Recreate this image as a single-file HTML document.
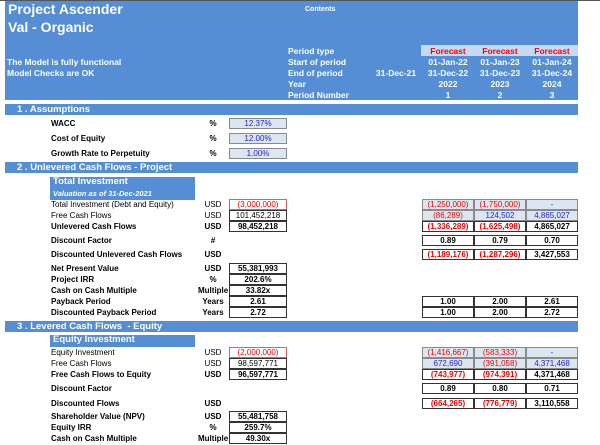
<!DOCTYPE html>
<html><head><meta charset="utf-8"><style>
body{margin:0;width:600px;height:445px;background:#fff;position:relative;overflow:hidden;font-family:"Liberation Sans",sans-serif;font-size:8px;color:#000}
div{position:absolute;white-space:nowrap}
.hd{background:#558ed5}
.w{color:#fff;font-weight:bold}
.bar{left:5px;width:573px;height:11px;background:#558ed5;color:#fff;font-weight:bold;font-size:9.5px;line-height:11px;padding-left:12px;box-sizing:border-box}
.l{left:51px;font-size:8px;line-height:10px}
.b{font-weight:bold}
.u{left:198px;width:30px;text-align:center;line-height:10px}
.c{height:9px;line-height:9px;border:1px solid #333;text-align:center;box-sizing:content-box}
.v{left:229px;width:56px}
.c1{left:422px;width:50px}.c2{left:474px;width:50px}.c3{left:526px;width:50px}
.in{background:#dce6f1;border-color:#8a8a8a}
.r{color:#e00}.bl{color:#2020e0}
.hc{width:52px;text-align:center;color:#fff;font-weight:bold;font-size:8.5px}
</style></head><body>
<div style="left:0;top:0;width:600px;height:1px;background:#555"></div>
<div class="hd" style="left:5px;top:1px;width:573px;height:99px"></div>
<div class="w" style="left:8px;top:1px;font-size:14px">Project Ascender</div>
<div class="w" style="left:8px;top:19px;font-size:14px">Val - Organic</div>
<div class="w" style="left:305px;top:6px;font-size:7px">Contents</div>
<div class="w" style="left:7px;top:57px;font-size:8.5px">The Model is fully functional</div>
<div class="w" style="left:7px;top:68px;font-size:8.5px">Model Checks are OK</div>
<div class="w" style="left:288px;top:46px;font-size:8.5px;line-height:11px;white-space:pre">Period type
Start of period
End of period
Year
Period Number</div>
<div style="left:421px;top:45px;width:157px;height:11px;background:#c6d9f1"></div>
<div class="hc" style="left:422px;top:46px;color:#f00">Forecast</div>
<div class="hc" style="left:474px;top:46px;color:#f00">Forecast</div>
<div class="hc" style="left:526px;top:46px;color:#f00">Forecast</div>
<div class="hc" style="left:422px;top:57px">01-Jan-22</div>
<div class="hc" style="left:474px;top:57px">01-Jan-23</div>
<div class="hc" style="left:526px;top:57px">01-Jan-24</div>
<div class="hc" style="left:370px;top:68px">31-Dec-21</div>
<div class="hc" style="left:422px;top:68px">31-Dec-22</div>
<div class="hc" style="left:474px;top:68px">31-Dec-23</div>
<div class="hc" style="left:526px;top:68px">31-Dec-24</div>
<div class="hc" style="left:422px;top:79px">2022</div>
<div class="hc" style="left:474px;top:79px">2023</div>
<div class="hc" style="left:526px;top:79px">2024</div>
<div class="hc" style="left:422px;top:90px">1</div>
<div class="hc" style="left:474px;top:90px">2</div>
<div class="hc" style="left:526px;top:90px">3</div>

<div class="bar" style="top:104px">1 . Assumptions</div>
<div class="l b" style="top:119px">WACC</div><div class="u b" style="top:119px">%</div><div class="c v in bl" style="top:118px">12.37%</div>
<div class="l b" style="top:134px">Cost of Equity</div><div class="u b" style="top:134px">%</div><div class="c v in bl" style="top:133px">12.00%</div>
<div class="l b" style="top:149px">Growth Rate to Perpetuity</div><div class="u b" style="top:149px">%</div><div class="c v in bl" style="top:148px">1.00%</div>

<div class="bar" style="top:162px">2 . Unlevered Cash Flows - Project</div>
<div style="left:50px;top:176px;width:145px;height:23px;background:#558ed5;border-top:1px solid #fff"></div>
<div class="w" style="left:53px;top:176px;font-size:9.5px">Total Investment</div>
<div class="w" style="left:53px;top:189px;font-size:7.5px;font-style:italic">Valuation as of 31-Dec-2021</div>
<div class="l" style="top:200px">Total Investment (Debt and Equity)</div><div class="u" style="top:200px">USD</div><div class="c v r" style="top:199px;border-color:#e06060">(3,000,000)</div>
<div class="l" style="top:211px">Free Cash Flows</div><div class="u" style="top:211px">USD</div><div class="c v" style="top:210px">101,452,218</div>
<div class="l b" style="top:222px">Unlevered Cash Flows</div><div class="u b" style="top:222px">USD</div><div class="c v b" style="top:221px">98,452,218</div>
<div class="c c1 in r" style="top:199px">(1,250,000)</div><div class="c c2 in r" style="top:199px">(1,750,000)</div><div class="c c3 in bl" style="top:199px">-</div>
<div class="c c1 in r" style="top:210px">(86,289)</div><div class="c c2 in bl" style="top:210px">124,502</div><div class="c c3 in bl" style="top:210px">4,865,027</div>
<div class="c c1 r b" style="top:221px">(1,336,289)</div><div class="c c2 r b" style="top:221px">(1,625,498)</div><div class="c c3 b" style="top:221px">4,865,027</div>
<div class="l b" style="top:236px">Discount Factor</div><div class="u b" style="top:236px">#</div>
<div class="c c1 b" style="top:235px">0.89</div><div class="c c2 b" style="top:235px">0.79</div><div class="c c3 b" style="top:235px">0.70</div>
<div class="l b" style="top:250px">Discounted Unlevered Cash Flows</div><div class="u b" style="top:250px">USD</div>
<div class="c c1 r b" style="top:249px">(1,189,176)</div><div class="c c2 r b" style="top:249px">(1,287,296)</div><div class="c c3 b" style="top:249px">3,427,553</div>
<div class="l b" style="top:264px">Net Present Value</div><div class="u b" style="top:264px">USD</div><div class="c v b" style="top:263px">55,381,993</div>
<div class="l b" style="top:275px">Project IRR</div><div class="u b" style="top:275px">%</div><div class="c v b" style="top:274px">202.6%</div>
<div class="l b" style="top:286px">Cash on Cash Multiple</div><div class="u b" style="top:286px">Multiple</div><div class="c v b" style="top:285px">33.82x</div>
<div class="l b" style="top:297px">Payback Period</div><div class="u b" style="top:297px">Years</div><div class="c v b" style="top:296px">2.61</div>
<div class="c c1 b" style="top:296px">1.00</div><div class="c c2 b" style="top:296px">2.00</div><div class="c c3 b" style="top:296px">2.61</div>
<div class="l b" style="top:308px">Discounted Payback Period</div><div class="u b" style="top:308px">Years</div><div class="c v b" style="top:307px">2.72</div>
<div class="c c1 b" style="top:307px">1.00</div><div class="c c2 b" style="top:307px">2.00</div><div class="c c3 b" style="top:307px">2.72</div>

<div class="bar" style="top:321px">3 . Levered Cash Flows &nbsp;- Equity</div>
<div style="left:50px;top:334px;width:145px;height:12px;background:#558ed5;border-top:1px solid #fff"></div>
<div class="w" style="left:53px;top:334px;font-size:9.5px">Equity Investment</div>
<div class="l" style="top:348px">Equity Investment</div><div class="u" style="top:348px">USD</div><div class="c v r" style="top:347px;border-color:#e06060">(2,000,000)</div>
<div class="l" style="top:359px">Free Cash Flows</div><div class="u" style="top:359px">USD</div><div class="c v" style="top:358px">98,597,771</div>
<div class="l b" style="top:370px">Free Cash Flows to Equity</div><div class="u b" style="top:370px">USD</div><div class="c v b" style="top:369px">96,597,771</div>
<div class="c c1 in r" style="top:347px">(1,416,667)</div><div class="c c2 in r" style="top:347px">(583,333)</div><div class="c c3 in bl" style="top:347px">-</div>
<div class="c c1 in bl" style="top:358px">672,690</div><div class="c c2 in r" style="top:358px">(391,058)</div><div class="c c3 in bl" style="top:358px">4,371,468</div>
<div class="c c1 r b" style="top:369px">(743,977)</div><div class="c c2 r b" style="top:369px">(974,391)</div><div class="c c3 b" style="top:369px">4,371,468</div>
<div class="l b" style="top:384px">Discount Factor</div>
<div class="c c1 b" style="top:383px">0.89</div><div class="c c2 b" style="top:383px">0.80</div><div class="c c3 b" style="top:383px">0.71</div>
<div class="l b" style="top:399px">Discounted Flows</div><div class="u b" style="top:399px">USD</div>
<div class="c c1 r b" style="top:398px">(664,265)</div><div class="c c2 r b" style="top:398px">(776,779)</div><div class="c c3 b" style="top:398px">3,110,558</div>
<div class="l b" style="top:412px">Shareholder Value (NPV)</div><div class="u b" style="top:412px">USD</div><div class="c v b" style="top:411px">55,481,758</div>
<div class="l b" style="top:423px">Equity IRR</div><div class="u b" style="top:423px">%</div><div class="c v b" style="top:422px">259.7%</div>
<div class="l b" style="top:434px">Cash on Cash Multiple</div><div class="u b" style="top:434px">Multiple</div><div class="c v b" style="top:433px">49.30x</div>
</body></html>
